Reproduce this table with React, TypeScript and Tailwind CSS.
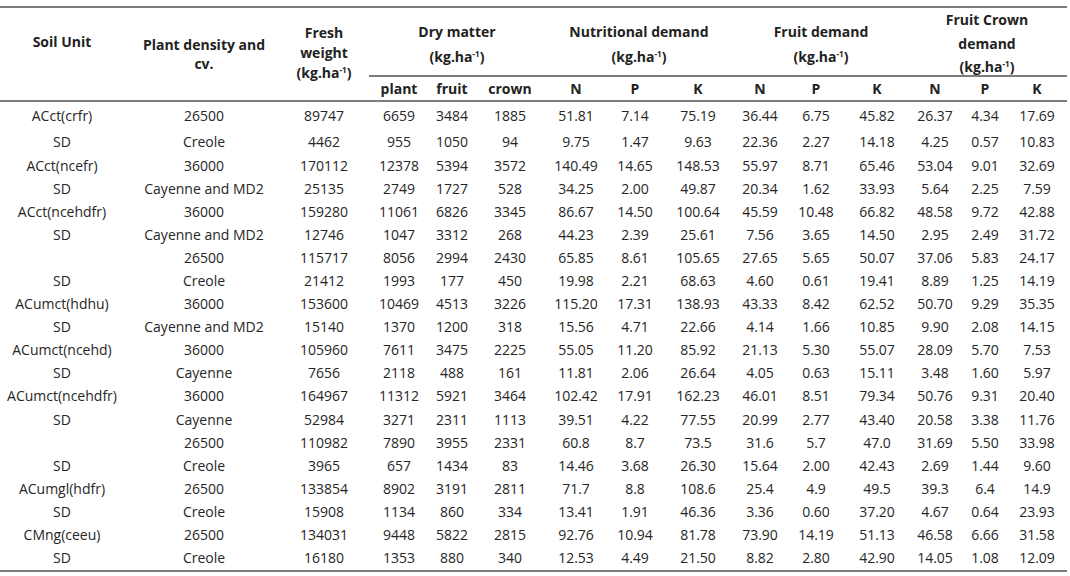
import type { ReactNode } from 'react';

// column template shared by header and body rows
const COLS =
  'grid grid-cols-[124px_160px_80px_70px_36px_80px_52px_66px_60px_64px_48px_74px_42px_58px_53px]';

const ROWS: string[][] = [
  ['ACct(crfr)', '26500', '89747', '6659', '3484', '1885', '51.81', '7.14', '75.19', '36.44', '6.75', '45.82', '26.37', '4.34', '17.69'],
  ['SD', 'Creole', '4462', '955', '1050', '94', '9.75', '1.47', '9.63', '22.36', '2.27', '14.18', '4.25', '0.57', '10.83'],
  ['ACct(ncefr)', '36000', '170112', '12378', '5394', '3572', '140.49', '14.65', '148.53', '55.97', '8.71', '65.46', '53.04', '9.01', '32.69'],
  ['SD', 'Cayenne and MD2', '25135', '2749', '1727', '528', '34.25', '2.00', '49.87', '20.34', '1.62', '33.93', '5.64', '2.25', '7.59'],
  ['ACct(ncehdfr)', '36000', '159280', '11061', '6826', '3345', '86.67', '14.50', '100.64', '45.59', '10.48', '66.82', '48.58', '9.72', '42.88'],
  ['SD', 'Cayenne and MD2', '12746', '1047', '3312', '268', '44.23', '2.39', '25.61', '7.56', '3.65', '14.50', '2.95', '2.49', '31.72'],
  ['', '26500', '115717', '8056', '2994', '2430', '65.85', '8.61', '105.65', '27.65', '5.65', '50.07', '37.06', '5.83', '24.17'],
  ['SD', 'Creole', '21412', '1993', '177', '450', '19.98', '2.21', '68.63', '4.60', '0.61', '19.41', '8.89', '1.25', '14.19'],
  ['ACumct(hdhu)', '36000', '153600', '10469', '4513', '3226', '115.20', '17.31', '138.93', '43.33', '8.42', '62.52', '50.70', '9.29', '35.35'],
  ['SD', 'Cayenne and MD2', '15140', '1370', '1200', '318', '15.56', '4.71', '22.66', '4.14', '1.66', '10.85', '9.90', '2.08', '14.15'],
  ['ACumct(ncehd)', '36000', '105960', '7611', '3475', '2225', '55.05', '11.20', '85.92', '21.13', '5.30', '55.07', '28.09', '5.70', '7.53'],
  ['SD', 'Cayenne', '7656', '2118', '488', '161', '11.81', '2.06', '26.64', '4.05', '0.63', '15.11', '3.48', '1.60', '5.97'],
  ['ACumct(ncehdfr)', '36000', '164967', '11312', '5921', '3464', '102.42', '17.91', '162.23', '46.01', '8.51', '79.34', '50.76', '9.31', '20.40'],
  ['SD', 'Cayenne', '52984', '3271', '2311', '1113', '39.51', '4.22', '77.55', '20.99', '2.77', '43.40', '20.58', '3.38', '11.76'],
  ['', '26500', '110982', '7890', '3955', '2331', '60.8', '8.7', '73.5', '31.6', '5.7', '47.0', '31.69', '5.50', '33.98'],
  ['SD', 'Creole', '3965', '657', '1434', '83', '14.46', '3.68', '26.30', '15.64', '2.00', '42.43', '2.69', '1.44', '9.60'],
  ['ACumgl(hdfr)', '26500', '133854', '8902', '3191', '2811', '71.7', '8.8', '108.6', '25.4', '4.9', '49.5', '39.3', '6.4', '14.9'],
  ['SD', 'Creole', '15908', '1134', '860', '334', '13.41', '1.91', '46.36', '3.36', '0.60', '37.20', '4.67', '0.64', '23.93'],
  ['CMng(ceeu)', '26500', '134031', '9448', '5822', '2815', '92.76', '10.94', '81.78', '73.90', '14.19', '51.13', '46.58', '6.66', '31.58'],
  ['SD', 'Creole', '16180', '1353', '880', '340', '12.53', '4.49', '21.50', '8.82', '2.80', '42.90', '14.05', '1.08', '12.09'],
];

const SUB = ['plant', 'fruit', 'crown', 'N', 'P', 'K', 'N', 'P', 'K', 'N', 'P', 'K'];

function Unit() {
  return (
    <span>
      (kg.ha<sup className="text-[8px] relative -top-[5px]">-1</sup>)
    </span>
  );
}

function Group({ children, className = '' }: { children: ReactNode; className?: string }) {
  return (
    <div className={`col-span-3 flex flex-col items-center border-b-2 border-[#7d7d7d] ${className}`}>
      {children}
    </div>
  );
}

function rowHeight(i: number) {
  if (i === 0) return 'h-[27px]';
  if (i === 1) return 'h-[25px]';
  return 'h-[23.1px]';
}

export default function App() {
  return (
    <div className="w-[1070px] h-[576px] bg-white pt-[6px] font-['Open_Sans',sans-serif] text-[14px] text-[#262626]">
      <div className="w-[1067px] border-t-2 border-b-2 border-[#7d7d7d]">
        {/* header */}
        <div className={`${COLS} grid-rows-[69px_23px] border-b-2 border-[#7d7d7d] font-bold text-[#222]`}>
          <div className="row-span-2 pt-[24px] text-center leading-[20px]">Soil Unit</div>
          <div className="row-span-2 pt-[27px] text-center leading-[19px]">
            Plant density and
            <br />
            cv.
          </div>
          <div className="row-span-2 pt-[15px] text-center leading-[20px]">
            Fresh
            <br />
            weight
            <br />
            <Unit />
          </div>
          <Group className="ml-[5px] pr-[5px] pt-[11px] leading-[25px]">
            <span>Dry matter</span>
            <Unit />
          </Group>
          <Group className="pt-[11px] leading-[25px]">
            <span>Nutritional demand</span>
            <Unit />
          </Group>
          <Group className="pt-[11px] leading-[25px]">
            <span>Fruit demand</span>
            <Unit />
          </Group>
          <Group className="pr-[7px] pt-0 leading-[23.5px]">
            <span>Fruit Crown</span>
            <span>demand</span>
            <Unit />
          </Group>
          {SUB.map((s, i) => (
            <div
              key={i}
              className={`flex items-center justify-center leading-[20px] ${i === SUB.length - 1 ? 'pr-[7px]' : ''}`}
            >
              {s}
            </div>
          ))}
        </div>

        {/* body */}
        {ROWS.map((row, r) => (
          <div key={r} className={`${COLS} ${rowHeight(r)}`}>
            {row.map((cell, c) => (
              <div
                key={c}
                className={`flex items-center justify-center whitespace-nowrap leading-[20px] ${c === row.length - 1 ? 'pr-[7px]' : ''}`}
              >
                {cell}
              </div>
            ))}
          </div>
        ))}
      </div>
    </div>
  );
}
